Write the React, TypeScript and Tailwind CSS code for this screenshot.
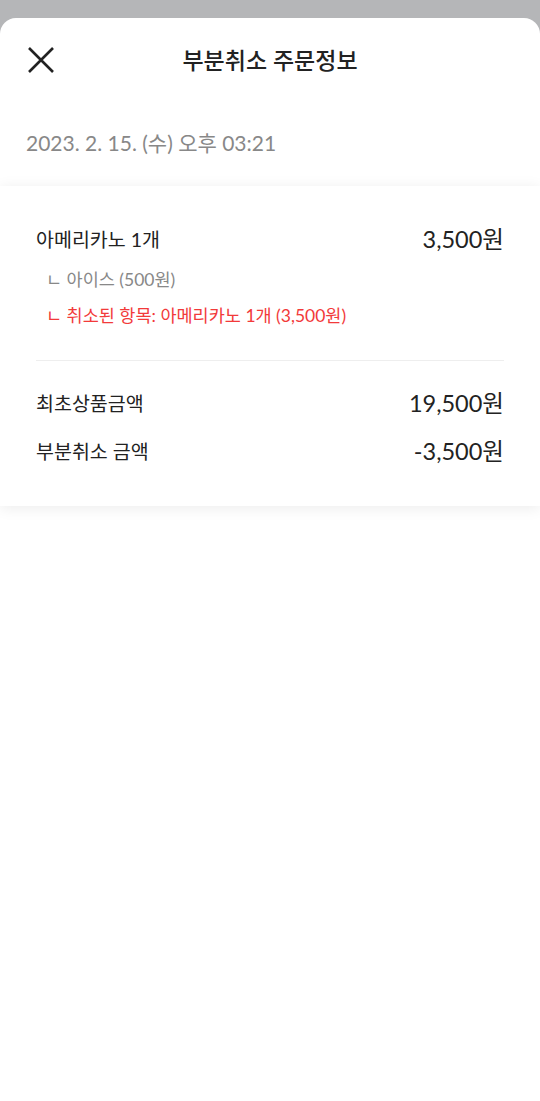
const font = { fontFamily: 'Lato, "Noto Sans CJK KR", sans-serif' };

function CloseIcon() {
  return (
    <svg width="28" height="28" viewBox="0 0 28 28" fill="none" stroke="currentColor" strokeWidth="2.6" strokeLinecap="butt">
      <path d="M2 2L26 26M26 2L2 26" />
    </svg>
  );
}

export default function App() {
  return (
    <div className="min-h-[1101px] bg-[#b5b6b8] pt-[18px]" style={font}>
      <div className="min-h-[1083px] rounded-t-[16px] bg-white">
        {/* Header */}
        <div className="relative flex h-[84px] items-center justify-center">
          <button className="absolute left-[27px] top-[28px] text-[#222]" aria-label="닫기">
            <CloseIcon />
          </button>
          <h1 className="text-[23px] font-medium text-[#222]">부분취소 주문정보</h1>
        </div>

        <div className="px-[26px] pt-[25px] pb-[27px] text-[21px] text-[#888]">
          2023. 2. 15. (수) 오후 03:21
        </div>

        {/* Card */}
        <div className="bg-white px-[36px] pt-[36px] pb-[37px] shadow-[0_2px_14px_rgba(0,0,0,0.08)]">
          <div className="flex items-center justify-between">
            <span className="text-[19.5px] text-[#222]">아메리카노 1개</span>
            <span className="text-[23.5px] text-[#222]">3,500원</span>
          </div>
          <div className="mt-[10px] pl-[10px] text-[17.5px] text-[#888]">ㄴ 아이스 (500원)</div>
          <div className="mt-[10px] pl-[10px] text-[17.5px] text-[#f23a3a]">
            ㄴ 취소된 항목: 아메리카노 1개 (3,500원)
          </div>

          <div className="mt-[31px] h-px bg-[#eeeeee]" />

          <div className="mt-[25px] flex items-center justify-between">
            <span className="text-[19.5px] text-[#222]">최초상품금액</span>
            <span className="text-[23.5px] text-[#222]">19,500원</span>
          </div>
          <div className="mt-[12px] flex items-center justify-between">
            <span className="text-[19.5px] text-[#222]">부분취소 금액</span>
            <span className="text-[23.5px] text-[#222]">-3,500원</span>
          </div>
        </div>
      </div>
    </div>
  );
}
